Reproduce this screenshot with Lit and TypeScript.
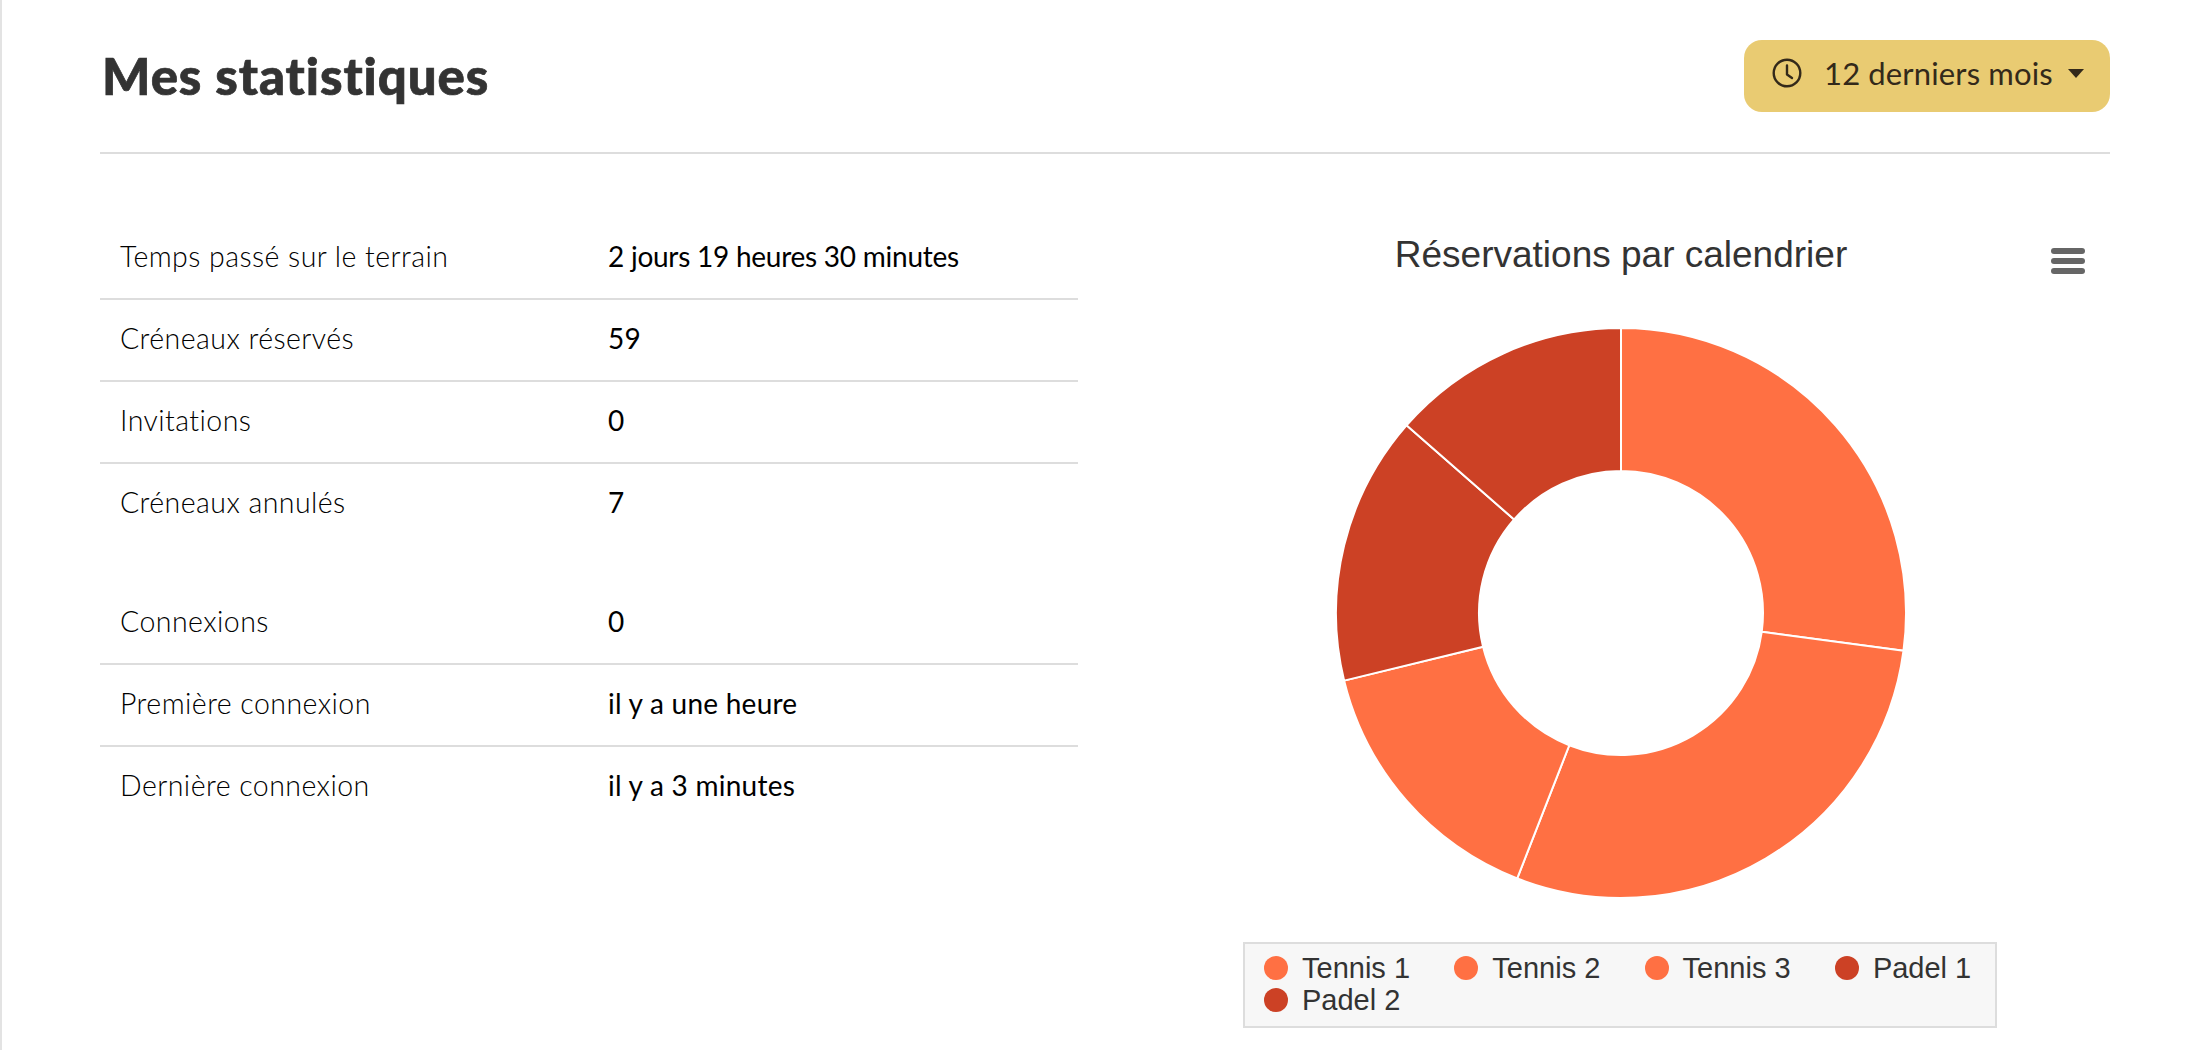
import { LitElement, html, css, svg } from "lit";
import { customElement } from "lit/decorators.js";

type Row = [string, string];
const groupA: Row[] = [
  ["Temps passé sur le terrain", "2 jours 19 heures 30 minutes"],
  ["Créneaux réservés", "59"],
  ["Invitations", "0"],
  ["Créneaux annulés", "7"],
];
const groupB: Row[] = [
  ["Connexions", "0"],
  ["Première connexion", "il y a une heure"],
  ["Dernière connexion", "il y a 3 minutes"],
];
const ORANGE = "#ff7043";
const RED = "#cc4125";
const slices = [
  { name: "Tennis 1", value: 16, color: ORANGE },
  { name: "Tennis 2", value: 17, color: ORANGE },
  { name: "Tennis 3", value: 9, color: ORANGE },
  { name: "Padel 1", value: 9, color: RED },
  { name: "Padel 2", value: 8, color: RED },
];

function arcPath(a0: number, a1: number, R: number, r: number, c: number) {
  const p = (a: number, rad: number) => `${(c + rad * Math.sin(a)).toFixed(2)} ${(c - rad * Math.cos(a)).toFixed(2)}`;
  const large = a1 - a0 > Math.PI ? 1 : 0;
  return `M${p(a0, R)}A${R} ${R} 0 ${large} 1 ${p(a1, R)}L${p(a1, r)}A${r} ${r} 0 ${large} 0 ${p(a0, r)}Z`;
}

@customElement("app-root")
export class AppRoot extends LitElement {
  static styles = css`
    :host { display: block; min-height: 1050px; box-sizing: border-box; background: #fff; border-left: 2px solid #e3e3e3; padding: 0 100px 0 98px; font-family: "Lato", "Liberation Sans", sans-serif; font-variant-ligatures: none; }
    .header { display: flex; justify-content: space-between; align-items: center; padding: 40px 0; border-bottom: 2px solid #dddddd; }
    h1 { margin: 0; font-size: 51px; line-height: 72px; font-weight: 900; color: #333; padding-left: 2px; letter-spacing: 0.9px; -webkit-text-stroke: 0.7px #333; }
    .btn { display: flex; align-items: center; width: 366px; height: 72px; box-sizing: border-box; padding: 0 26px 6px 28px; background: #e9cb72; border-radius: 18px; color: #33291a; font-size: 31px; font-weight: 400; }
    .btn svg { flex: none; }
    .btn .label { margin-left: 22px; flex: 1; white-space: nowrap; letter-spacing: 0.15px; }
    .caret { width: 0; height: 0; border-left: 8px solid transparent; border-right: 8px solid transparent; border-top: 9px solid #33291a; }
    .cols { display: grid; grid-template-columns: 978px 978px; column-gap: 54px; padding-top: 64px; }
    .group + .group { margin-top: 39px; }
    .row { display: grid; grid-template-columns: 488px 1fr; height: 82px; box-sizing: border-box; align-items: center; padding: 0 0 4px 20px; border-bottom: 2px solid #dddddd; font-size: 28px; }
    .row:last-child { border-bottom: 0; height: 80px; }
    .k { font-weight: 300; font-size: 28.5px; letter-spacing: 0.45px; color: #000; }
    .v { font-weight: 400; color: #000; letter-spacing: 0.25px; }
    .row:first-child .v.long { letter-spacing: -0.25px; }
    .chart { display: flex; flex-direction: column; align-items: center; }
    .title-row { align-self: stretch; display: grid; grid-template-columns: 1fr auto 1fr; margin-top: 16px; height: 41px; }
    .chart-title { grid-column: 2; font-family: "Liberation Sans", Arial, sans-serif; font-size: 37px; line-height: 41px; color: #333; white-space: nowrap; }
    .menu { grid-column: 3; justify-self: end; margin: 14px 25px 0 0; display: block; }
    .donut { display: block; margin-top: 52px; }
    .legend { margin: 43px 2px 0 0; width: 754px; height: 86px; box-sizing: border-box; border: 2px solid #dddddd; background: #f7f7f7; padding: 8px 0 0 19px; display: grid; grid-template-columns: repeat(4, 190.3px); grid-auto-rows: 32px; font-family: "Liberation Sans", Arial, sans-serif; font-size: 29px; color: #333; }
    .item { display: flex; align-items: center; }
    .dot { width: 24px; height: 24px; border-radius: 50%; margin-right: 14px; flex: none; }
  `;

  render() {
    const R = 285, r = 142, c = 286;
    let acc = 0;
    const total = slices.reduce((s, x) => s + x.value, 0);
    const paths = slices.map((s) => {
      const a0 = (acc / total) * 2 * Math.PI;
      acc += s.value;
      const a1 = (acc / total) * 2 * Math.PI;
      return svg`<path d=${arcPath(a0, a1, R, r, c)} fill=${s.color} stroke="#fff" stroke-width="2" stroke-linejoin="round"></path>`;
    });
    const rows = (g: Row[]) => html`<div class="group">${g.map(([k, v]) => html`<div class="row"><span class="k">${k}</span><span class="v ${v.length > 20 ? "long" : ""}">${v}</span></div>`)}</div>`;
    return html`
      <div class="header">
        <h1>Mes statistiques</h1>
        <div class="btn">
          <svg width="30" height="30" viewBox="0 0 30 30" fill="none" stroke="#33291a" stroke-width="2.4" stroke-linecap="round" stroke-linejoin="round"><circle cx="15" cy="15" r="13.3"></circle><path d="M15 7.5V16.5L20 20"></path></svg>
          <span class="label">12 derniers mois</span>
          <span class="caret"></span>
        </div>
      </div>
      <div class="cols">
        <div>${rows(groupA)}${rows(groupB)}</div>
        <div class="chart">
          <div class="title-row">
            <div class="chart-title">Réservations par calendrier</div>
            <svg class="menu" width="34" height="26" viewBox="0 0 34 26" fill="#666"><rect x="0" y="0" width="34" height="6" rx="3"></rect><rect x="0" y="10" width="34" height="6" rx="3"></rect><rect x="0" y="20" width="34" height="6" rx="3"></rect></svg>
          </div>
          <svg class="donut" width="572" height="572" viewBox="0 0 572 572">${paths}</svg>
          <div class="legend">
            ${slices.map((s) => html`<div class="item"><span class="dot" style="background:${s.color}"></span><span>${s.name}</span></div>`)}
          </div>
        </div>
      </div>
    `;
  }
}
